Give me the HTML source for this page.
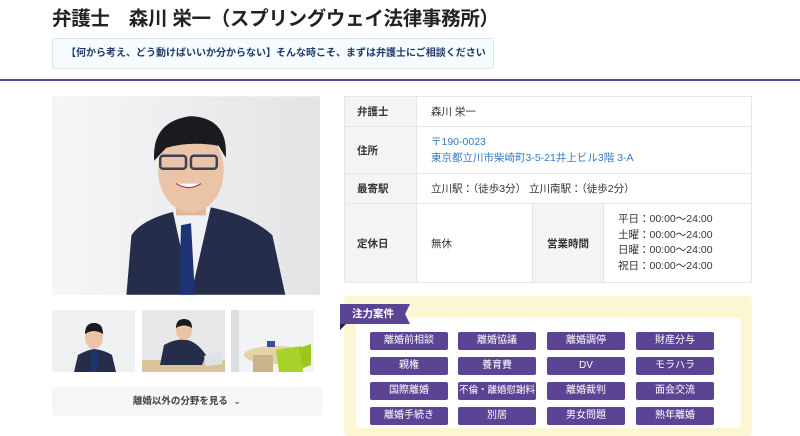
<!DOCTYPE html>
<html><head><meta charset="utf-8"><style>
*{margin:0;padding:0;box-sizing:border-box}
body{width:800px;height:420px;overflow:hidden;background:#fff;font-family:"Liberation Sans","Noto Sans CJK JP",sans-serif;color:#333;position:relative}
.abs{position:absolute}
h1{position:absolute;left:52px;top:2px;font-size:19.5px;font-weight:bold;color:#222;letter-spacing:-0.3px;white-space:nowrap}
.note{left:52px;top:38px;width:442px;height:31px;border:1px solid #d6e6ee;background:#f5fbfe;border-radius:3px;font-size:10px;font-weight:bold;color:#1f3a6b;line-height:29px;padding-left:13px;white-space:nowrap}
.rule{left:0;top:79px;width:800px;height:2px;background:#5b4494}
table{position:absolute;left:344px;top:96px;width:408px;border-collapse:collapse;font-size:10.5px}
td{border:1px solid #e6e6e6;padding:0 0 0 14px;vertical-align:middle}
td.l{background:#f4f4f4;font-weight:bold;width:72px;padding-left:12px}
.blue{color:#3a78c3}
.yel{left:344px;top:296px;width:408px;height:140px;background:#fcf6d3;border-radius:4px}
.wh{left:356px;top:318px;width:385px;height:110px;background:#fff;border-radius:3px}
.tag{left:340px;top:304px;width:70px;height:20px;background:#5b4494;color:#fff;font-size:10.5px;font-weight:bold;line-height:20px;padding-left:12px;clip-path:polygon(0 0,100% 0,93% 50%,100% 100%,0 100%)}
.fold{left:340px;top:324px;width:0;height:0;border-top:6px solid #2c1f4f;border-left:6px solid transparent;transform:scaleX(-1)}
.t{position:absolute;height:18px;width:78px;background:#5b4494;color:#fff;font-size:10px;text-align:center;line-height:18px;border-radius:2px;white-space:nowrap;overflow:hidden}
.btn{left:52px;top:387px;width:270px;height:29px;background:#f6f6f6;border-radius:3px;font-size:9.5px;font-weight:bold;color:#444;text-align:center;line-height:29px}
</style></head><body>
<h1>弁護士　森川 栄一（スプリングウェイ法律事務所）</h1>
<div class="abs note">【何から考え、どう動けばいいか分からない】そんな時こそ、まずは弁護士にご相談ください</div>
<div class="abs rule"></div>

<svg class="abs" style="left:52px;top:96px" width="268" height="199" viewBox="0 0 270 200">
<defs><linearGradient id="bg" x1="0" x2="1"><stop offset="0" stop-color="#f6f6f8"/><stop offset="1" stop-color="#e4e4e6"/></linearGradient></defs>
<rect width="270" height="200" fill="url(#bg)"/>
<path d="M75 200 L80 140 Q90 125 120 117 L160 112 Q200 120 222 140 L235 200Z" fill="#252d4a"/>
<path d="M122 117 L140 200 L160 112 Q150 108 140 110Z" fill="#eef0f3"/>
<path d="M130 130 L140 128 L144 200 L128 200Z" fill="#1d3373"/>
<rect x="125" y="95" width="30" height="25" fill="#e0b598"/>
<ellipse cx="140" cy="75" rx="33" ry="42" fill="#ebc3a6"/>
<path d="M103 65 Q100 25 140 20 Q178 22 175 62 L168 50 Q140 45 115 52Z" fill="#1b1b1f"/>
<rect x="109" y="60" width="26" height="13" rx="3" fill="none" stroke="#3a4356" stroke-width="2.5"/>
<rect x="140" y="60" width="26" height="13" rx="3" fill="none" stroke="#3a4356" stroke-width="2.5"/>
<path d="M125 88 Q138 96 150 88" fill="#fff" stroke="#a25" stroke-width="1"/>
</svg>

<svg class="abs" style="left:52px;top:310px" width="83" height="62"><rect width="83" height="62" fill="#eef0f2"/><path d="M22 62 L26 45 Q35 40 42 39 Q52 40 60 45 L64 62Z" fill="#252d4a"/><rect x="39" y="40" width="6" height="22" fill="#1d3373"/><ellipse cx="42" cy="27" rx="9" ry="12" fill="#ebc3a6"/><path d="M33 24 Q33 13 42 13 Q51 13 51 24 Q42 18 33 24Z" fill="#1b1b1f"/></svg>
<svg class="abs" style="left:142px;top:310px" width="83" height="62"><rect width="83" height="62" fill="#e8e8ea"/><rect x="0" y="50" width="83" height="12" fill="#d9c39a"/><path d="M18 55 L22 35 Q35 28 45 30 Q55 32 64 45 L60 55Z" fill="#252d4a"/><ellipse cx="42" cy="20" rx="8" ry="10" fill="#ebc3a6"/><path d="M34 18 Q34 9 42 9 Q50 9 50 18 Q42 13 34 18Z" fill="#1b1b1f"/><path d="M62 46 L82 40 L80 54 L64 56Z" fill="#dfe2e6"/></svg>
<svg class="abs" style="left:231px;top:310px" width="83" height="62"><rect width="83" height="62" fill="#f2f3f4"/><rect x="0" y="0" width="8" height="62" fill="#dcdde0"/><ellipse cx="45" cy="45" rx="32" ry="9" fill="#e6d2a8"/><rect x="22" y="45" width="20" height="17" fill="#c9b48a"/><path d="M45 40 L70 36 L72 62 L48 62Z" fill="#a6d22a"/><path d="M68 38 L80 34 L80 55 L72 58Z" fill="#9cc61f"/><rect x="36" y="31" width="8" height="6" fill="#3650a0"/></svg>

<div class="abs btn">離婚以外の分野を見る&nbsp;&nbsp;<span style="font-weight:normal">⌄</span></div>

<table>
<tr style="height:30px"><td class="l">弁護士</td><td colspan="3">森川 栄一</td></tr>
<tr style="height:47px"><td class="l">住所</td><td colspan="3" class="blue" style="line-height:16px">〒190-0023<br>東京都立川市柴崎町3-5-21井上ビル3階 3-A</td></tr>
<tr style="height:30px"><td class="l">最寄駅</td><td colspan="3">立川駅：（徒歩3分） 立川南駅：（徒歩2分）</td></tr>
<tr style="height:79px"><td class="l">定休日</td><td style="width:116px">無休</td><td class="l" style="width:71px;text-align:center;padding:0">営業時間</td><td style="line-height:15.5px">平日：00:00〜24:00<br>土曜：00:00〜24:00<br>日曜：00:00〜24:00<br>祝日：00:00〜24:00</td></tr>
</table>

<div class="abs yel"></div>
<div class="abs wh"></div>
<div class="abs fold"></div>
<div class="abs tag">注力案件</div>
<div class="abs" style="left:0;top:0">
<div class="t" style="left:370px;top:332px">離婚前相談</div><div class="t" style="left:458px;top:332px">離婚協議</div><div class="t" style="left:547px;top:332px">離婚調停</div><div class="t" style="left:636px;top:332px">財産分与</div>
<div class="t" style="left:370px;top:357px">親権</div><div class="t" style="left:458px;top:357px">養育費</div><div class="t" style="left:547px;top:357px">DV</div><div class="t" style="left:636px;top:357px">モラハラ</div>
<div class="t" style="left:370px;top:382px">国際離婚</div><div class="t" style="left:458px;top:382px;font-size:9.5px">不倫・離婚慰謝料</div><div class="t" style="left:547px;top:382px">離婚裁判</div><div class="t" style="left:636px;top:382px">面会交流</div>
<div class="t" style="left:370px;top:407px">離婚手続き</div><div class="t" style="left:458px;top:407px">別居</div><div class="t" style="left:547px;top:407px">男女問題</div><div class="t" style="left:636px;top:407px">熟年離婚</div>
</div>
</body></html>
